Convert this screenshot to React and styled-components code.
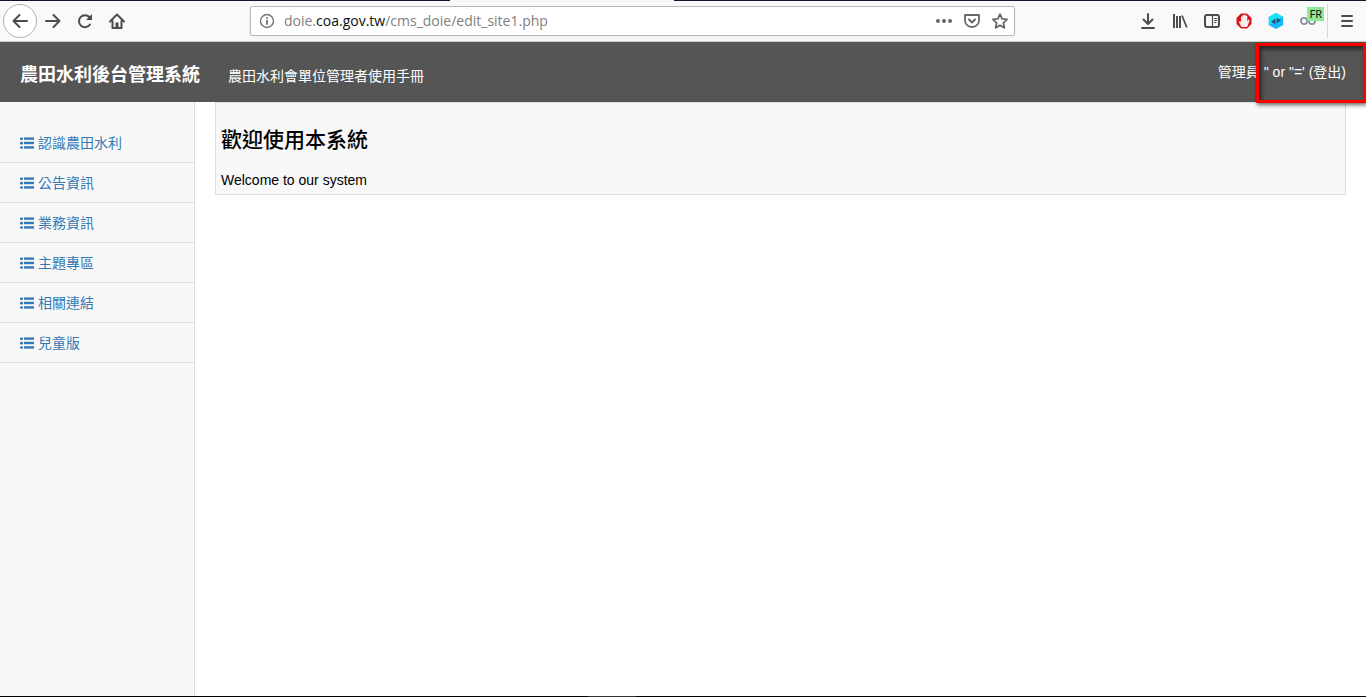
import React from "react";
import styled, { createGlobalStyle } from "styled-components";

const Global = createGlobalStyle`
  *, *::before, *::after { box-sizing: border-box; }
  html, body, #root { height: 100%; }
  body {
    margin: 0;
    background: #fff;
    color: #000;
    font-family: "Liberation Sans", "Noto Sans CJK TC", sans-serif;
    font-size: 14px;
    line-height: 20px;
  }
`;

const Window = styled.div`
  min-height: 100%;
  display: flex;
  flex-direction: column;
`;

const TabStrip = styled.div`
  display: flex;
  height: 1px;
  background: #14142b;
`;

const ActiveTab = styled.div`
  width: 224px;
  margin-left: 450px;
  background: #f9f9fa;
`;

const Toolbar = styled.div`
  display: flex;
  align-items: center;
  justify-content: space-between;
  height: 41px;
  padding-left: 3px;
  background: #f9f9fa;
  border-bottom: 1px solid #ccc;
`;

const NavButtons = styled.div`
  display: flex;
  align-items: center;
  width: 247px;
`;

const IconButton = styled.button`
  display: flex;
  align-items: center;
  justify-content: center;
  flex: none;
  width: ${(p) => p.$width || 32}px;
  height: 32px;
  padding: 0;
  border: 0;
  background: none;
  color: ${(p) => p.$color || "#4c4c4f"};
`;

const BackButton = styled(IconButton)`
  width: 34px;
  height: 34px;
  border: 1px solid #b1b1b3;
  border-radius: 50%;
  background: #fff;
`;

const AddressBar = styled.div`
  display: flex;
  align-items: center;
  flex: 0 1 765px;
  height: 30px;
  border: 1px solid #b8b8b8;
  border-radius: 2px;
  background: #fff;
  box-shadow: 0 1px 4px rgba(0, 0, 0, 0.05);
`;

const Address = styled.a`
  flex: 1;
  padding: 0 0 1px 1px;
  color: #808080;
  font: 14px/20px "Open Sans", "Noto Sans", sans-serif;
  text-decoration: none;
  white-space: nowrap;
`;

const Domain = styled.span`
  color: #0c0c0d;
`;

const Tools = styled.div`
  display: flex;
  align-items: center;
  justify-content: flex-end;
  flex: 1;
`;

const MenuSlot = styled.div`
  display: flex;
  align-items: center;
  height: 34px;
  margin-left: 3px;
  border-left: 1px solid #d7d7db;
`;

const TranslatorButton = styled(IconButton)`
  position: relative;
`;

const Badge = styled.span`
  position: absolute;
  top: 2px;
  right: 0;
  padding: 0 2px;
  background: #90e896;
  color: #111;
  font: 11px/14px "Noto Sans", sans-serif;
`;

const Header = styled.header`
  display: flex;
  align-items: center;
  height: 60px;
  padding: 0 20px;
  background: #555;
  color: #fff;
`;

const Title = styled.h1`
  margin: 0 28px 0 0;
  padding-top: 6px;
  font-size: 18px;
  font-weight: 700;
  line-height: 24px;
`;

const HeaderLink = styled.a`
  padding-top: ${(p) => p.$drop || 0}px;
  color: #fff;
  text-decoration: none;
`;

const Account = styled.div`
  position: relative;
  margin-left: auto;
`;

const Highlight = styled.div`
  position: absolute;
  top: -19px;
  right: -20px;
  width: 110px;
  height: 60px;
  border: 3px solid #f00;
  box-shadow: 1px 2px 4px rgba(0, 0, 0, 0.6), inset 2px 3px 5px rgba(0, 0, 0, 0.6);
  pointer-events: none;
`;

const Body = styled.div`
  display: flex;
  flex: 1;
`;

const Sidebar = styled.nav`
  flex: none;
  width: 195px;
  padding-top: 21px;
  background: #f8f8f8;
  border-right: 1px solid #ddd;
`;

const Menu = styled.ul`
  margin: 0;
  padding: 0;
  list-style: none;
`;

const MenuLink = styled.a`
  display: flex;
  align-items: center;
  gap: 4px;
  height: 40px;
  padding-left: 20px;
  border-bottom: 1px solid #ddd;
  color: #337ab7;
  text-decoration: none;
`;

const Main = styled.main`
  flex: 1;
  padding: 0 20px;
`;

const Panel = styled.section`
  padding: 22px 5px 4px;
  border: 1px solid #ddd;
  background: #f8f8f8;
`;

const PanelTitle = styled.h2`
  margin: 0 0 15px;
  font-size: 21px;
  font-weight: 500;
  line-height: 30px;
`;

const Text = styled.p`
  margin: 0;
`;

const Taskbar = styled.div`
  display: flex;
  height: 1px;
  background: #000;
`;

const TaskItem = styled.div`
  width: 48px;
  margin-left: 588px;
  background: #333;
`;

const Icon = ({ children, size = 16, ...rest }) => (
  <svg
    width={size}
    height={size}
    viewBox="0 0 16 16"
    fill="none"
    stroke="currentColor"
    strokeWidth="2"
    strokeLinecap="round"
    strokeLinejoin="round"
    aria-hidden="true"
    {...rest}
  >
    {children}
  </svg>
);

const ListIcon = () => (
  <svg width="14" height="12" viewBox="0 0 14 12" fill="currentColor" aria-hidden="true">
    {[0.4, 4.8, 9.2].map((y) => (
      <React.Fragment key={y}>
        <rect x="0" y={y} width="3" height="2.600" rx="1" />
        <rect x="4" y={y} width="10" height="2.400" />
      </React.Fragment>
    ))}
  </svg>
);

const items = ["認識農田水利", "公告資訊", "業務資訊", "主題專區", "相關連結", "兒童版"];

export default function App() {
  return (
    <Window>
      <Global />
      <TabStrip>
        <ActiveTab />
      </TabStrip>
      <Toolbar>
        <NavButtons>
          <BackButton aria-label="Back">
            <Icon><path d="M15 8H1.500M7.500 2L1.500 8l6 6" /></Icon>
          </BackButton>
          <IconButton aria-label="Forward">
            <Icon><path d="M1 8h13.500M8.500 2l6 6-6 6" /></Icon>
          </IconButton>
          <IconButton aria-label="Reload">
            <Icon>
              <path d="M13 11.500A6 6 0 1 1 12.300 4" />
              <path d="M15 1v6H9z" fill="currentColor" stroke="none" />
            </Icon>
          </IconButton>
          <IconButton aria-label="Home">
            <Icon>
              <path d="M1 8.500L8 1.500l7 7M3.500 8v7h9V8" />
              <path d="M6.500 15V9.500h3V15z" fill="currentColor" stroke="none" />
            </Icon>
          </IconButton>
        </NavButtons>
        <AddressBar>
          <IconButton aria-label="Site information" $color="#737373">
            <Icon strokeWidth="1.400">
              <circle cx="8" cy="8" r="6.500" />
              <path d="M8 7.700v3.300M8 4.900v.1" strokeWidth="1.900" />
            </Icon>
          </IconButton>
          <Address href="#">
            doie.<Domain>coa.gov.tw</Domain>/cms_doie/edit_site1.php
          </Address>
          <IconButton aria-label="Page actions" $width={28} $color="#666">
            <Icon fill="currentColor" stroke="none">
              <circle cx="2" cy="8" r="2" />
              <circle cx="8" cy="8" r="2" />
              <circle cx="14" cy="8" r="2" />
            </Icon>
          </IconButton>
          <IconButton aria-label="Save to Pocket" $width={28} $color="#666">
            <Icon>
              <path d="M1 2h14v5.500a7 6.500 0 0 1-14 0z" strokeWidth="1.800" />
              <path d="M5 6.500l3 3 3-3" />
            </Icon>
          </IconButton>
          <IconButton aria-label="Bookmark" $width={28} $color="#666">
            <Icon>
              <path d="M8 1.200l2.100 4.600 5 .6-3.700 3.400 1 5L8 12.400l-4.400 2.400 1-5L.9 6.400l5-.6z" strokeWidth="1.800" />
            </Icon>
          </IconButton>
        </AddressBar>
        <Tools>
          <IconButton aria-label="Downloads">
            <Icon><path d="M8 1v9.500M3.500 6.500L8 11l4.500-4.500M2 15h12" /></Icon>
          </IconButton>
          <IconButton aria-label="Library">
            <Icon strokeLinecap="butt">
              <path d="M2 1v14M5 3v12M8 3v12" />
              <path d="M10 2.500L14.800 14.500" strokeWidth="1.700" />
            </Icon>
          </IconButton>
          <IconButton aria-label="Sidebars">
            <Icon>
              <rect x="1" y="2" width="14" height="12" rx="2" />
              <path d="M8.500 2v12" strokeWidth="1.200" />
              <path d="M10.500 5.500h2.500M10.500 7.500h2.500M10.500 9.500h1.500" strokeWidth="1" />
            </Icon>
          </IconButton>
          <IconButton aria-label="Ad blocker">
            <Icon stroke="none">
              <path d="M5 .5h6L15.500 5v6L11 15.500H5L.5 11V5z" fill="#df1016" />
              <path d="M5.500 14L2.800 9 4 8l1 1V3.500h1.400V2.200h1.700V1.700h1.700v1h1.500v5.500L12.600 6.500l1 .8-2 6L10.300 14z" fill="#f5eeee" />
            </Icon>
          </IconButton>
          <IconButton aria-label="Connector">
            <Icon stroke="none">
              <path d="M8 0l7.200 4v8L8 16 .8 12V4z" fill="#16b9ff" />
              <path d="M.8 4L8 0l7.200 4L.8 12z" fill="#18e0f8" />
              <path d="M7.500 5.500V11L3 8.800zM8.700 4.800v5.500L13 7.300z" fill="#344b67" />
            </Icon>
          </IconButton>
          <TranslatorButton aria-label="Translator FR" $color="#83949d">
            <Icon strokeWidth="1.800">
              <circle cx="4" cy="8" r="3.100" />
              <circle cx="12" cy="8" r="3.100" />
            </Icon>
            <Badge>FR</Badge>
          </TranslatorButton>
          <MenuSlot>
            <IconButton aria-label="Menu" $width={38}>
              <Icon><path d="M3 3h10M3 8h10M3 13h10" /></Icon>
            </IconButton>
          </MenuSlot>
        </Tools>
      </Toolbar>
      <Header>
        <Title>農田水利後台管理系統</Title>
        <HeaderLink href="#" $drop={8}>農田水利會單位管理者使用手冊</HeaderLink>
        <Account>
          管理員 " or "=' (<HeaderLink href="#">登出</HeaderLink>)
          <Highlight />
        </Account>
      </Header>
      <Body>
        <Sidebar>
          <Menu>
            {items.map((label) => (
              <li key={label}>
                <MenuLink href="#">
                  <ListIcon />
                  {label}
                </MenuLink>
              </li>
            ))}
          </Menu>
        </Sidebar>
        <Main>
          <Panel>
            <PanelTitle>歡迎使用本系統</PanelTitle>
            <Text>Welcome to our system</Text>
          </Panel>
        </Main>
      </Body>
      <Taskbar>
        <TaskItem />
      </Taskbar>
    </Window>
  );
}
